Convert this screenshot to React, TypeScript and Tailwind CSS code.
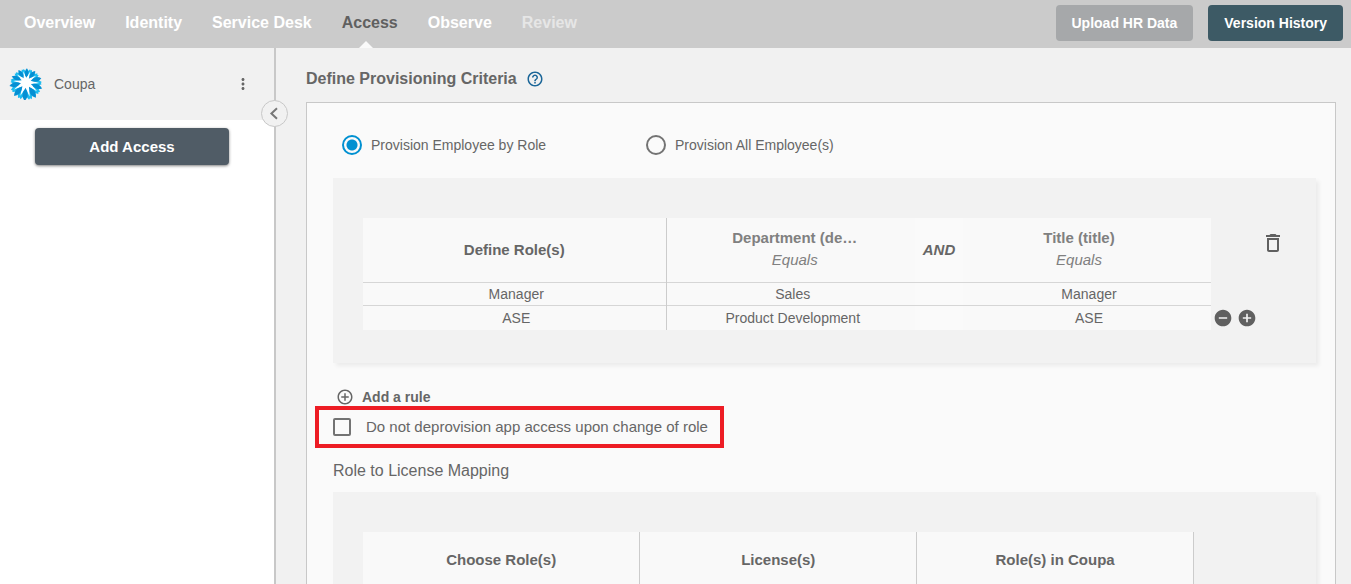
import type { ReactNode } from "react";
import {
  MdAddCircle,
  MdAddCircleOutline,
  MdDeleteOutline,
  MdHelpOutline,
  MdMoreVert,
  MdRemoveCircle,
} from "react-icons/md";

type NavState = "normal" | "active" | "disabled";

const navItems: { label: string; state: NavState }[] = [
  { label: "Overview", state: "normal" },
  { label: "Identity", state: "normal" },
  { label: "Service Desk", state: "normal" },
  { label: "Access", state: "active" },
  { label: "Observe", state: "normal" },
  { label: "Review", state: "disabled" },
];

const navColors: Record<NavState, string> = {
  normal: "text-white",
  active: "text-[#606060]",
  disabled: "text-[#e6e6e6]",
};

const rules = [
  { role: "Manager", department: "Sales", title: "Manager" },
  { role: "ASE", department: "Product Development", title: "ASE" },
];

const petals = [0, 1, 2, 3, 4, 5, 6, 7, 8, 9];

function petalTransform(step: number) {
  const angle = 184 + step * 36;
  const scale = 1 - 0.16 * Math.cos((angle * Math.PI) / 180);
  return `translate(17 14) rotate(${angle}) scale(${scale})`;
}

function CoupaLogo() {
  return (
    <svg viewBox="0 0 34 32" className="h-8 w-[34px] shrink-0" aria-hidden="true">
      <circle cx="17" cy="14.5" r="8.5" fill="#fff" />
      {petals.map((i) => (
        <path
          key={`light-${i}`}
          d="M0 -6 L-3 -8.5 Q-3.2 -13 -1.2 -15.6 L0 -14.6 L1.2 -15.6 Q3.2 -13 3 -8.5 Z"
          fill="#1cbcf0"
          transform={petalTransform(i + 0.5)}
        />
      ))}
      {petals.map((i) => (
        <path
          key={`spike-${i}`}
          d="M-1.9 -4 L0 -13 L1.9 -4 Z"
          fill="#fff"
          transform={petalTransform(i + 0.5)}
        />
      ))}
      {petals.map((i) => (
        <path
          key={`dark-${i}`}
          d="M0 -5 Q-2.6 -9 -2.2 -12.2 Q-1.6 -14.6 0 -16.4 Q1.6 -14.6 2.2 -12.2 Q2.6 -9 0 -5 Z"
          fill="#058fd3"
          transform={petalTransform(i)}
        />
      ))}
    </svg>
  );
}

function Card({ children }: { children: ReactNode }) {
  return (
    <section className="flex bg-[#f2f2f2] py-10 pl-[30px] shadow-[3px_3px_4px_rgba(0,0,0,0.06)]">
      {children}
    </section>
  );
}

function RadioOption({ label, checked }: { label: string; checked?: boolean }) {
  return (
    <label className="flex w-[304px] items-center gap-[9px] text-sm leading-5">
      <input
        type="radio"
        name="provision"
        defaultChecked={checked}
        className="size-5 shrink-0 appearance-none rounded-full border-2 border-[#737373] checked:border-[#0090d1] checked:bg-[radial-gradient(circle,#0090d1_5px,transparent_6px)]"
      />
      {label}
    </label>
  );
}

function Condition({ name }: { name: string }) {
  return (
    <>
      <div className="text-[15px] font-bold leading-[22px]">{name}</div>
      <div className="text-[15px] font-normal italic leading-[22px]">Equals</div>
    </>
  );
}

export default function App() {
  return (
    <div className="flex h-screen flex-col overflow-hidden bg-[#f1f1f1] font-['Liberation_Sans',Arial,sans-serif] text-[#666]">
      <header className="flex h-12 shrink-0 items-center justify-between bg-[#cbcbcb] pl-6 pr-2">
        <nav className="flex h-full gap-[30px] text-base font-bold">
          {navItems.map(({ label, state }) => (
            <a
              key={label}
              href="#"
              className={`relative flex h-full items-center pb-[3px] whitespace-nowrap ${navColors[state]}`}
            >
              {label}
              {state === "active" && (
                <span className="absolute bottom-0 left-[17px] border-x-[7px] border-b-[7px] border-x-transparent border-b-[#fafafa]" />
              )}
            </a>
          ))}
        </nav>
        <div className="flex gap-[15px] pb-[2px] text-sm font-bold whitespace-nowrap text-white">
          <button className="h-9 rounded bg-[#a6a8aa] px-4">Upload HR Data</button>
          <button className="h-9 rounded bg-[#3d5a65] px-4">Version History</button>
        </div>
      </header>

      <div className="flex min-h-0 grow">
        <aside className="relative w-[276px] shrink-0 border-r-2 border-[#c8c8c8] bg-white">
          <div className="flex h-[72px] items-center bg-[#f1f1f1] pl-[9px] pr-[22px]">
            <CoupaLogo />
            <span className="ml-[11px] grow text-sm">Coupa</span>
            <button aria-label="More options">
              <MdMoreVert className="size-[18px]" />
            </button>
          </div>
          <div className="px-[35px] pt-2">
            <button className="h-[37px] w-[194px] rounded bg-[#505c66] pt-px text-[15px] font-bold text-white shadow-[0_1px_3px_rgba(0,0,0,0.5)]">
              Add Access
            </button>
          </div>
          <button
            aria-label="Collapse sidebar"
            className="absolute top-[52px] -right-[14px] flex size-[27px] items-center justify-center rounded-full border border-[#c8c8c8] bg-[#f1f1f1]"
          >
            <svg viewBox="0 0 13 13" className="size-[13px]" aria-hidden="true">
              <path d="M9 1.2 L3.4 6.5 L9 11.8" fill="none" stroke="#777" strokeWidth="2" />
            </svg>
          </button>
        </aside>

        <main className="min-w-0 grow overflow-y-auto pl-[30px] pr-[15px] pt-5 [scrollbar-width:none]">
          <div className="flex h-[22px] items-center gap-[9px]">
            <h1 className="text-base font-bold leading-5">Define Provisioning Criteria</h1>
            <button aria-label="Help">
              <MdHelpOutline className="size-[18px] text-[#1b6698]" />
            </button>
          </div>

          <div className="mt-3 border border-[#c8c8c8] bg-[#fafafa] pb-10 pl-[26px] pr-[19px] pt-8">
            <div className="mb-[23px] flex pl-[9px]">
              <RadioOption label="Provision Employee by Role" checked />
              <RadioOption label="Provision All Employee(s)" />
            </div>

            <Card>
              <table className="mb-[-7px] w-0 grow table-fixed border-collapse bg-[#f9f9f9] text-center">
                <colgroup>
                  <col className="w-[303px]" />
                  <col className="w-[249px]" />
                  <col className="w-12" />
                  <col />
                </colgroup>
                <thead>
                  <tr className="h-16 text-[15px]">
                    <th className="border-r border-[#ccc]">Define Role(s)</th>
                    <th className="pb-[2px] pl-2 text-[#808080]">
                      <Condition name="Department (de…" />
                    </th>
                    <th className="bg-[#fafafa] italic">AND</th>
                    <th className="pb-[2px] pr-4 text-[#808080]">
                      <Condition name="Title (title)" />
                    </th>
                  </tr>
                </thead>
                <tbody className="text-sm leading-5">
                  {rules.map((rule) => (
                    <tr
                      key={rule.role}
                      className="h-[23px] border-t border-[#d6d6d6] last:h-[25px]"
                    >
                      <td className="border-r border-[#ccc] pl-1">{rule.role}</td>
                      <td className="pl-1">{rule.department}</td>
                      <td className="bg-[#fafafa]" />
                      <td className="pl-1">{rule.title}</td>
                    </tr>
                  ))}
                </tbody>
              </table>
              <div className="mb-[-7px] flex w-[105px] shrink-0 flex-col justify-between pb-[2px] pl-[2px] pt-[13px] text-[#606060]">
                <button aria-label="Delete rule" className="ml-12 w-6">
                  <MdDeleteOutline className="size-6" />
                </button>
                <div className="flex gap-1">
                  <button aria-label="Remove row">
                    <MdRemoveCircle className="size-5" />
                  </button>
                  <button aria-label="Add row">
                    <MdAddCircle className="size-5" />
                  </button>
                </div>
              </div>
            </Card>

            <button className="ml-[3px] mt-6 flex h-[19px] items-center gap-2 text-sm font-bold">
              <MdAddCircleOutline className="size-[18px]" />
              Add a rule
            </button>

            <label className="-ml-[18px] flex h-[42px] w-[409px] items-center gap-[15px] border-4 border-[#ed1c24] pl-[14px] text-[15px] whitespace-nowrap">
              <input
                type="checkbox"
                className="size-[18px] shrink-0 appearance-none rounded-xs border-2 border-[#737373] checked:bg-[#0090d1]"
              />
              Do not deprovision app access upon change of role
            </label>

            <h2 className="mb-[11px] mt-[13px] text-base leading-5">Role to License Mapping</h2>

            <Card>
              <table className="mr-[122px] grow table-fixed border-collapse bg-[#f9f9f9] text-center text-[15px]">
                <thead>
                  <tr className="h-14">
                    <th className="w-1/3 border-r border-[#ccc]">Choose Role(s)</th>
                    <th className="w-1/3 border-r border-[#ccc]">License(s)</th>
                    <th className="w-1/3 border-r border-[#ccc]">Role(s) in Coupa</th>
                  </tr>
                </thead>
              </table>
            </Card>
          </div>
        </main>
      </div>
    </div>
  );
}
